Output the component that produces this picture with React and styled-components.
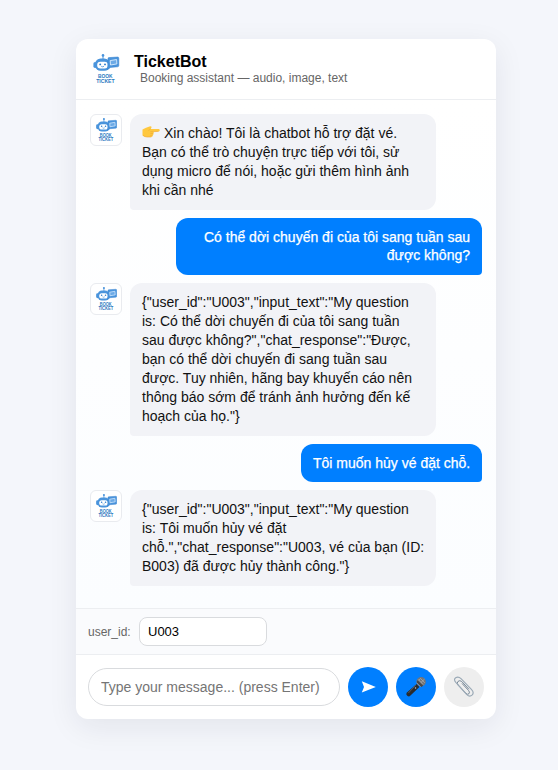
import React from "react";
import styled, { createGlobalStyle, css } from "styled-components";

const Global = createGlobalStyle`
  * { box-sizing: border-box; }
  html, body { margin: 0; height: 100%; }
  body {
    background: #f4f6fb;
    font-family: "Liberation Sans", Arial, sans-serif;
    color: #111;
  }
  #root { height: 100%; }
`;

const Page = styled.main`
  width: 100%;
  height: 770px;
  padding-top: 39px;
  display: flex;
  justify-content: center;
  align-items: flex-start;
  padding-left: 14px;
  overflow: hidden;
`;

const Card = styled.section`
  width: 420px;
  height: 680px;
  display: flex;
  flex-direction: column;
  overflow: hidden;
  border-radius: 12px;
  background: #fff;
  box-shadow: 0 8px 30px rgba(20, 20, 50, 0.08);
`;

const Header = styled.header`
  height: 61px;
  flex: none;
  display: flex;
  align-items: center;
  gap: 8px;
  padding: 0 14px;
  border-bottom: 1px solid #eceef1;
`;

const HeaderLogo = styled.div`
  width: 36px;
  height: 36px;
  display: flex;
  align-items: center;
  padding-left: 2px;
`;

const Title = styled.h1`
  margin: 0;
  font-size: 16px;
  line-height: 18px;
  font-weight: 700;
  color: #000;
`;

const Subtitle = styled.div`
  margin: 0 0 1px 6px;
  font-size: 12px;
  line-height: 14px;
  color: #666;
`;

const Messages = styled.div`
  flex: 1;
  min-height: 0;
  display: flex;
  flex-direction: column;
  gap: 8px;
  padding: 14px;
  background: linear-gradient(180deg, #ffffff, #fbfdff);
`;

const Row = styled.div`
  display: flex;
  align-items: flex-start;
  gap: 8px;
  justify-content: ${(p) => (p.$mine ? "flex-end" : "flex-start")};
`;

const Avatar = styled.div`
  width: 32px;
  height: 32px;
  flex: none;
  display: flex;
  align-items: center;
  justify-content: center;
  padding-bottom: 1px;
  border: 1px solid #e9ebef;
  border-radius: 6px;
  background: #fff;
`;

const Bubble = styled.div`
  width: ${(p) => p.$width}px;
  padding: 10px 12px;
  font-size: 14px;
  line-height: 1.35;
  border-radius: 12px;
  white-space: nowrap;
  ${(p) =>
    p.$mine
      ? css`
          background: #007fff;
          color: #fff;
          text-align: right;
          border-bottom-right-radius: 4px;
          -webkit-text-stroke: 0.25px #fff;
        `
      : css`
          background: #f2f3f7;
          color: #111;
          border-bottom-left-radius: 4px;
        `}
`;

const Line = styled.div`
  height: 18.9px;
`;

const Hand = styled.svg`
  width: 18px;
  height: 14px;
  margin-right: 4px;
  vertical-align: -1px;
`;

const UserBar = styled.div`
  height: 46px;
  flex: none;
  display: flex;
  align-items: center;
  gap: 8px;
  padding: 0 12px;
  border-top: 1px solid #eceef1;
  background: #fafbfd;
`;

const Label = styled.label`
  width: 43px;
  font-size: 12px;
  color: #666;
`;

const UserInput = styled.input`
  width: 128px;
  height: 29px;
  padding: 0 8px;
  border: 1px solid #d9dbde;
  border-radius: 8px;
  outline: none;
  background: #fff;
  color: #000;
  font: 13px "Liberation Sans", Arial, sans-serif;
`;

const Composer = styled.div`
  height: 65px;
  flex: none;
  display: flex;
  align-items: center;
  gap: 8px;
  padding: 0 12px;
  border-top: 1px solid #eceef1;
`;

const MessageInput = styled.input`
  flex: 1;
  min-width: 0;
  height: 38px;
  padding: 0 12px;
  border: 1px solid #d9dbde;
  border-radius: 20px;
  outline: none;
  background: #fff;
  font: 14px "Liberation Sans", Arial, sans-serif;
  &::placeholder { color: #757575; opacity: 1; }
`;

const RoundButton = styled.button`
  width: 40px;
  height: 40px;
  flex: none;
  display: flex;
  align-items: center;
  justify-content: center;
  padding: 0;
  border: 0;
  border-radius: 50%;
  background: ${(p) => (p.$quiet ? "#eeeeee" : "#007fff")};
`;

const SendIcon = styled.svg`
  width: 15px;
  height: 12px;
  margin-bottom: 1px;
`;

function BotLogo({ width, height }) {
  return (
    <svg width={width} height={height} viewBox="0 0 28 32">
      <g fill="#4a94dc">
        <path d="M11 2.5v4" stroke="#4a94dc" strokeWidth="1" />
        <circle cx="11" cy="2.4" r="1.3" />
        <rect x="1.4" y="9" width="3.5" height="6" rx="1.7" />
        <rect x="3.2" y="5.4" width="14.6" height="12.4" rx="5.4" />
        <rect x="5.2" y="8.8" width="10.6" height="6.6" rx="3.2" fill="#fff" />
        <path d="M16 5.3Q16 4.7 16.8 4.6L25.6 4Q26.8 4 26.8 5.2V12.6Q26.8 13.7 25.7 13.8L18.6 14.4 15.6 16.6 15.9 13.6Z" stroke="#3480cc" strokeWidth=".5" />
        <path d="m18.2 7.6 6.4-1.1.3 4.4-6.4 1.1z" fill="#6caae6" stroke="#d9ecfd" strokeWidth=".9" />
      </g>
      <circle cx="8.2" cy="11.4" r=".95" fill="#2f7fce" />
      <circle cx="13" cy="11.4" r=".95" fill="#2f7fce" />
      <path d="M9.2 13.3q1.4 1 2.8 0" fill="none" stroke="#2f7fce" strokeWidth=".7" />
      <g fill="#2b78c0" fontFamily="Liberation Sans, Arial, sans-serif" fontSize="5.8" fontWeight="700" textAnchor="middle">
        <text x="13.3" y="24.8" textLength="14.6" lengthAdjust="spacingAndGlyphs">BOOK</text>
        <text x="13.4" y="30" textLength="18.4" lengthAdjust="spacingAndGlyphs">TICKET</text>
      </g>
    </svg>
  );
}

function PointingHand() {
  return (
    <Hand viewBox="0 0 18 14">
      <path d="M.5 4.5 4 2.8 7.5 1.5Q9 .8 9.5 1.8 9.8 2.8 8.7 4H16.7Q18 4.2 17.8 5.4 17.6 6.2 16.5 6.4L11.4 6.7Q12.4 7.6 11.3 8.5 12 9.6 10.7 10.3 11 11.8 9.3 12H5Q2.5 12 .5 10.5Z" fill="#ffc83f" />
      <path d="m8.7 4-2.3 1.5M11.4 6.7H8.4M11.3 8.5H8.4M10.7 10.3H8.2" fill="none" stroke="#e9a233" strokeWidth=".5" />
      <path d="M1 10.4Q3 12 5 12H9.3M11.4 6.7l5.1-.3" fill="none" stroke="#eea638" strokeWidth=".6" />
    </Hand>
  );
}

function Microphone() {
  return (
    <svg width="22" height="22" viewBox="0 0 22 22">
      <path d="M11.6 8 14.4 11 5.2 19.8Q4.1 20.9 2.5 20 .6 18.7 1.6 16.8Z" fill="#292b2e" />
      <path d="m10.7 9.2-7.4 7.9" stroke="#58595b" strokeWidth="1" />
      <path d="m10 11.6 1 .8" stroke="#ddd" strokeWidth="1.2" />
      <circle cx="16.1" cy="5.8" r="4.7" fill="#727578" />
      <path d="m11.6 6.2 4.7 4.8 1.9-1.3-5.6-5.5z" fill="#454749" />
      <path d="m13.8 4.3 1.1-1.4M16 6.4l3.5-3.2M15.2 2.1l4.5 4.7M13.3 3.5l4.8 4.9" stroke="#aeb1b2" strokeWidth=".7" />
      <path d="m11.7 6.7 4 4" stroke="#999" strokeWidth=".7" />
    </svg>
  );
}

function Paperclip() {
  return (
    <svg width="22" height="22" viewBox="0 0 22 22" fill="none" strokeLinecap="round" strokeLinejoin="round">
      <path d="m15.7 13-6.9-7.4Q6.8 3.8 5 5.4 3.3 7.2 5.1 9.2l7.6 8Q14.7 19.1 16 17.7 17.2 16.3 15.5 14.4L9.2 7.7" stroke="#7b8b9a" />
      <path d="M6.8 10.7 2.8 6.4Q.3 3.4 2.7 1.8 5.4.2 8 2.7l10.4 10.6Q21.6 16.7 19 19.2 16.6 21.4 13.6 18.4L6.8 10.7" stroke="#9aa9b6" strokeWidth="1.15" />
    </svg>
  );
}

const messages = [
  {
    width: 306,
    hand: true,
    lines: ["Xin chào! Tôi là chatbot hỗ trợ đặt vé.", "Bạn có thể trò chuyện trực tiếp với tôi, sử", "dụng micro để nói, hoặc gửi thêm hình ảnh", "khi cần nhé"],
  },
  { mine: true, width: 306, lines: ["Có thể dời chuyến đi của tôi sang tuần sau", "được không?"] },
  {
    width: 306,
    lines: ["{\"user_id\":\"U003\",\"input_text\":\"My question", "is: Có thể dời chuyến đi của tôi sang tuần", "sau được không?\",\"chat_response\":\"Được,", "bạn có thể dời chuyến đi sang tuần sau", "được. Tuy nhiên, hãng bay khuyến cáo nên", "thông báo sớm để tránh ảnh hưởng đến kế", "hoạch của họ.\"}"],
  },
  { mine: true, width: 181, lines: ["Tôi muốn hủy vé đặt chỗ."] },
  {
    width: 306,
    lines: ["{\"user_id\":\"U003\",\"input_text\":\"My question", "is: Tôi muốn hủy vé đặt", "chỗ.\",\"chat_response\":\"U003, vé của bạn (ID:", "B003) đã được hủy thành công.\"}"],
  },
];

export default function App() {
  return (
    <>
      <Global />
      <Page>
        <Card>
          <Header>
            <HeaderLogo><BotLogo width={28} height={32} /></HeaderLogo>
            <div>
              <Title>TicketBot</Title>
              <Subtitle>Booking assistant — audio, image, text</Subtitle>
            </div>
          </Header>
          <Messages>
            {messages.map((m, i) => (
              <Row key={i} $mine={m.mine}>
                {!m.mine && <Avatar><BotLogo width={22.7} height={26} /></Avatar>}
                <Bubble $mine={m.mine} $width={m.width}>
                  {m.lines.map((line, j) => (
                    <Line key={line}>
                      {m.hand && j === 0 && <PointingHand />}
                      {line}
                    </Line>
                  ))}
                </Bubble>
              </Row>
            ))}
          </Messages>
          <UserBar>
            <Label htmlFor="user">user_id:</Label>
            <UserInput id="user" defaultValue="U003" />
          </UserBar>
          <Composer>
            <MessageInput placeholder="Type your message... (press Enter)" />
            <RoundButton aria-label="Send">
              <SendIcon viewBox="0 0 15 12"><path d="M.8.2 14.8 5.9.8 11.6 3 5.9Z" fill="#fff" /></SendIcon>
            </RoundButton>
            <RoundButton aria-label="Record"><Microphone /></RoundButton>
            <RoundButton aria-label="Attach" $quiet><Paperclip /></RoundButton>
          </Composer>
        </Card>
      </Page>
    </>
  );
}
